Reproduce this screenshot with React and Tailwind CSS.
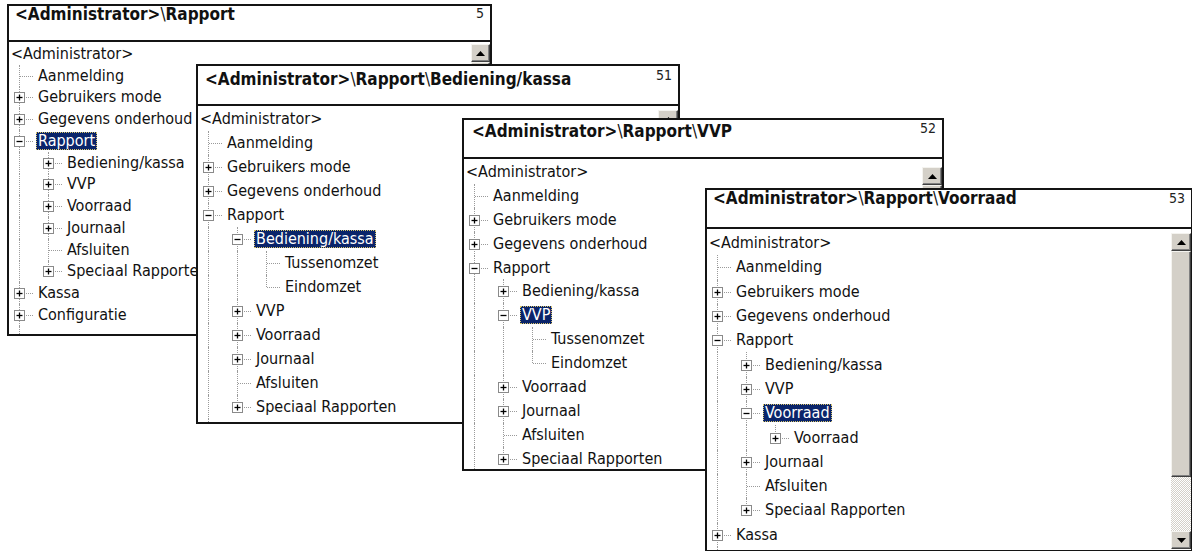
const LINE = "border-dotted border-[#9a9a9a]";

const head = (rapportSel) => [
  [0, "<Administrator>", "root"],
  [1, "Aanmelding", "leaf"],
  [1, "Gebruikers mode", "plus"],
  [1, "Gegevens onderhoud", "plus"],
  [1, "Rapport", "minus", false, rapportSel],
];

const windows = [
  {
    pos: "left-[7px] top-[4px] w-[485px] h-[332px]",
    headH: "h-[36px]",
    titlePad: "pt-0 pl-[6px]",
    numPad: "pt-0 pr-[6px]",
    title: "<Administrator>\\Rapport",
    num: "5",
    treePad: "pt-[1px]",
    rowH: "h-[21.75px]",
    sb: "w-[19px] pt-[2px]",
    thumb: "h-[120px]",
    rows: [
      ...head(true),
      [2, "Bediening/kassa", "plus"],
      [2, "VVP", "plus"],
      [2, "Voorraad", "plus"],
      [2, "Journaal", "plus"],
      [2, "Afsluiten", "leaf"],
      [2, "Speciaal Rapporten", "plus", true],
      [1, "Kassa", "plus"],
      [1, "Configuratie", "plus"],
    ],
  },
  {
    pos: "left-[196px] top-[64px] w-[484px] h-[360px]",
    headH: "h-[40px]",
    titlePad: "pt-[5px] pl-[7px]",
    numPad: "pt-[2px] pr-[6px]",
    title: "<Administrator>\\Rapport\\Bediening/kassa",
    num: "51",
    treePad: "pt-[1px]",
    rowH: "h-[24px]",
    sb: "w-[20px] pt-[4px]",
    thumb: "h-[140px]",
    rows: [
      ...head(false),
      [2, "Bediening/kassa", "minus", false, true],
      [3, "Tussenomzet", "leaf"],
      [3, "Eindomzet", "leaf", true],
      [2, "VVP", "plus"],
      [2, "Voorraad", "plus"],
      [2, "Journaal", "plus"],
      [2, "Afsluiten", "leaf"],
      [2, "Speciaal Rapporten", "plus", true],
    ],
  },
  {
    pos: "left-[462px] top-[118px] w-[482px] h-[353px]",
    headH: "h-[39px]",
    titlePad: "pt-[3px] pl-[8px]",
    numPad: "pt-[1px] pr-[6px]",
    title: "<Administrator>\\Rapport\\VVP",
    num: "52",
    treePad: "pt-[1px]",
    rowH: "h-[23.9px]",
    sb: "w-[20px] pt-[8px]",
    thumb: "h-[140px]",
    rows: [
      ...head(false),
      [2, "Bediening/kassa", "plus"],
      [2, "VVP", "minus", false, true],
      [3, "Tussenomzet", "leaf"],
      [3, "Eindomzet", "leaf", true],
      [2, "Voorraad", "plus"],
      [2, "Journaal", "plus"],
      [2, "Afsluiten", "leaf"],
      [2, "Speciaal Rapporten", "plus", true],
    ],
  },
  {
    pos: "left-[705px] top-[188px] w-[488px] h-[364px]",
    headH: "h-[39px]",
    titlePad: "pt-0 pl-[6px]",
    numPad: "pt-[1px] pr-[6px]",
    title: "<Administrator>\\Rapport\\Voorraad",
    num: "53",
    treePad: "pt-[2px]",
    rowH: "h-[24.3px]",
    sb: "w-[20px] pt-[4px] pb-[1px]",
    thumb: "h-[226px]",
    rows: [
      ...head(false),
      [2, "Bediening/kassa", "plus"],
      [2, "VVP", "plus"],
      [2, "Voorraad", "minus", false, true],
      [3, "Voorraad", "plus", true],
      [2, "Journaal", "plus"],
      [2, "Afsluiten", "leaf"],
      [2, "Speciaal Rapporten", "plus", true],
      [1, "Kassa", "plus"],
    ],
  },
];

function ExpandBox({ open }) {
  return (
    <svg width="11" height="11" viewBox="0 0 11 11" className="block">
      <rect x="0.5" y="0.5" width="10" height="10" fill="#fff" stroke="#8a8a8a" />
      <path d="M2.5 5.5h6" stroke="#000" strokeWidth="1.3" />
      {!open && <path d="M5.5 2.5v6" stroke="#000" strokeWidth="1.3" />}
    </svg>
  );
}

function Elbow({ last, kind }) {
  return (
    <div className="relative h-full w-[27px] shrink-0">
      <div className={`absolute left-[10px] top-0 border-l ${LINE} ${last ? "h-1/2" : "h-full"}`} />
      <div className={`absolute left-[11px] top-1/2 w-[13px] border-t ${LINE}`} />
      {kind !== "leaf" && (
        <div className="absolute left-[5px] top-[calc(50%-5px)]">
          <ExpandBox open={kind === "minus"} />
        </div>
      )}
    </div>
  );
}

function Tree({ rows, rowH }) {
  const lastAt = [];
  return rows.map(([depth, label, kind, last = false, sel = false], i) => {
    lastAt[depth] = last;
    const guides = [];
    for (let k = 1; k < depth; k++) guides.push(!lastAt[k]);
    return (
      <div key={i} className={`flex shrink-0 items-center ${rowH}`}>
        {guides.map((on, k) => (
          <div key={k} className="h-full w-[29px] shrink-0">
            {on && <div className={`ml-[10px] h-full border-l ${LINE}`} />}
          </div>
        ))}
        {depth > 0 && <Elbow last={last} kind={kind} />}
        <span
          className={`h-[18px] px-[2px] text-[16px] leading-[18px] whitespace-nowrap ${
            sel
              ? "bg-[#0a246a] text-white outline-1 -outline-offset-1 outline-dotted outline-[#d9c46a]"
              : "text-[#111]"
          }`}
        >
          {label}
        </span>
      </div>
    );
  });
}

function SbButton({ down }) {
  return (
    <div className="flex h-[18px] shrink-0 items-center justify-center border border-t-[#f4f3ef] border-r-[#404040] border-b-[#404040] border-l-[#f4f3ef] bg-[#d4d0c8] shadow-[inset_-1px_-1px_0_#808080]">
      <svg width="9" height="5" viewBox="0 0 9 5">
        <path d={down ? "M0 0h9L4.5 5z" : "M0 5h9L4.5 0z"} fill="#000" />
      </svg>
    </div>
  );
}

function Scrollbar({ cls, thumb }) {
  return (
    <div className={`flex shrink-0 flex-col ${cls}`}>
      <SbButton />
      <div
        className={`shrink-0 border border-t-[#f4f3ef] border-r-[#404040] border-b-[#404040] border-l-[#f4f3ef] bg-[#d4d0c8] shadow-[inset_-1px_-1px_0_#808080] ${thumb}`}
      />
      <div className="min-h-0 flex-1 bg-[repeating-conic-gradient(#d4d0c8_0%_25%,#ffffff_0%_50%)] bg-[length:2px_2px]" />
      <SbButton down />
    </div>
  );
}

// path separators in the header are drawn in regular weight
function Title({ text }) {
  const parts = text.split("\\");
  return parts.map((p, i) => (
    <span key={i}>
      {i > 0 && <span className="font-normal">\</span>}
      {p}
    </span>
  ));
}

function Win({ w }) {
  return (
    <div className={`absolute flex flex-col overflow-hidden border-2 border-[#141414] bg-white ${w.pos}`}>
      <div className={`flex shrink-0 justify-between border-b-2 border-[#141414] ${w.headH}`}>
        <div className={`text-[17px] leading-none font-bold whitespace-nowrap text-[#111] ${w.titlePad}`}>
          <Title text={w.title} />
        </div>
        <div className={`text-[14px] leading-none text-[#222] ${w.numPad}`}>{w.num}</div>
      </div>
      <div className="flex min-h-0 flex-1">
        <div className={`flex min-w-0 flex-1 flex-col overflow-hidden ${w.treePad}`}>
          <Tree rows={w.rows} rowH={w.rowH} />
          <div className={`ml-[10px] min-h-0 flex-1 border-l ${LINE}`} />
        </div>
        <Scrollbar cls={w.sb} thumb={w.thumb} />
      </div>
    </div>
  );
}

export default function App() {
  return (
    <div className="relative h-[551px] w-[1192px] overflow-hidden bg-white font-['DejaVu_Sans_Condensed','Liberation_Sans',sans-serif]">
      {windows.map((w, i) => (
        <Win key={i} w={w} />
      ))}
    </div>
  );
}
